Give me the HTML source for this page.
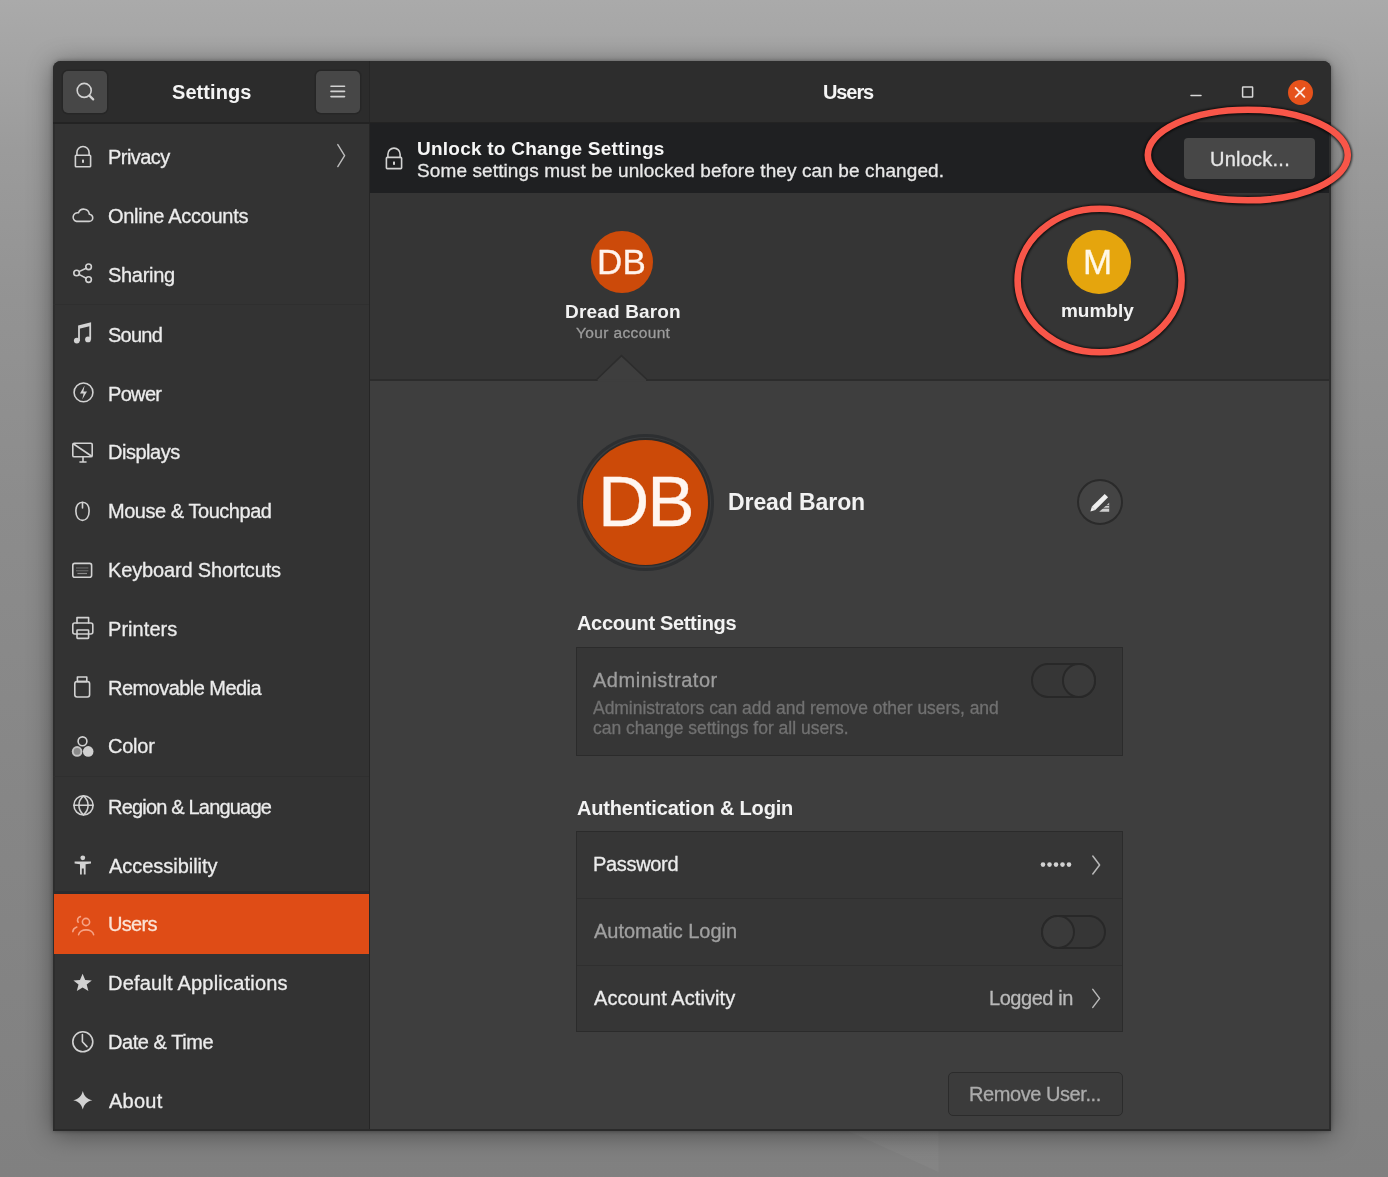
<!DOCTYPE html>
<html><head><meta charset="utf-8">
<style>
*{margin:0;padding:0;box-sizing:border-box}
html,body{width:1388px;height:1177px;overflow:hidden}
body{position:relative;font-family:"Liberation Sans",sans-serif;
background:linear-gradient(180deg,#aaaaaa 0px,#a4a4a4 60px,#9b9b9b 150px,#939393 300px,#8c8c8c 500px,#868686 800px,#808080 1177px);}
.a{position:absolute}
.t{position:absolute;white-space:nowrap;line-height:1;will-change:transform}
svg{position:absolute;left:0;top:0}
</style></head><body>
<svg width="1388" height="1177" viewBox="0 0 1388 1177">
 <polygon points="848,1131 938.5,1131 938.5,1172" fill="#fff" opacity=".035"/>
</svg>
<div class="a" style="left:53px;top:61px;width:1278px;height:1070px;border-radius:8px 8px 0 0;box-shadow:0 3px 26px rgba(0,0,0,.42),0 0 4px rgba(0,0,0,.35);background:#2d2d2d"></div>
<div class="a" style="left:55px;top:123px;width:1274px;height:1006px;background:#3e3e3e"></div>
<div class="a" style="left:53px;top:61px;width:316px;height:62px;background:#2c2c2c;border-radius:8px 0 0 0"></div>
<div class="a" style="left:370px;top:61px;width:961px;height:62px;background:#2d2d2d;border-radius:0 8px 0 0"></div>
<div class="a" style="left:55px;top:123px;width:314px;height:1006px;background:#333333"></div>
<div class="a" style="left:369px;top:61px;width:1px;height:1070px;background:#262626"></div>
<div class="a" style="left:53px;top:122px;width:1278px;height:2px;background:#232323"></div>
<div class="a" style="left:53px;top:1129px;width:1277px;height:2px;background:#2a2a2a"></div>
<!-- sidebar separators -->
<div class="a" style="left:53px;top:304px;width:316px;height:1px;background:#2f2f2f"></div>
<div class="a" style="left:53px;top:776px;width:316px;height:1px;background:#2f2f2f"></div>
<!-- header buttons -->
<div class="a" style="left:63px;top:71px;width:44px;height:42px;background:#474747;border-radius:5px;box-shadow:0 0 0 1.5px #262626"></div>
<div class="a" style="left:316px;top:71px;width:44px;height:42px;background:#474747;border-radius:5px;box-shadow:0 0 0 1.5px #262626"></div>
<div class="a" style="left:1287.5px;top:79.6px;width:25.4px;height:25.4px;background:#e6521b;border-radius:50%"></div>
<!-- info bar -->
<div class="a" style="left:370px;top:123px;width:959px;height:70px;background:#1f2022"></div>
<div class="a" style="left:1184px;top:138px;width:131px;height:41px;background:#474747;border-radius:4px"></div>
<!-- carousel -->
<div class="a" style="left:370px;top:193px;width:959px;height:187px;background:#353535"></div>
<div class="a" style="left:370px;top:379px;width:959px;height:2px;background:#2c2c2c"></div>
<div class="a" style="left:590.6px;top:230.6px;width:62.6px;height:62.6px;border-radius:50%;background:#cc4a0a"></div>
<div class="a" style="left:1066.7px;top:230.4px;width:64px;height:64px;border-radius:50%;background:#e5a50d"></div>
<!-- big avatar -->
<div class="a" style="left:576.7px;top:433.6px;width:137.6px;height:137.6px;border-radius:50%;background:#2d2f31"></div>
<div class="a" style="left:579.7px;top:436.6px;width:131.6px;height:131.6px;border-radius:50%;background:#3a3c3e"></div>
<div class="a" style="left:581.5px;top:438.4px;width:128px;height:128px;border-radius:50%;background:#2b2b2b"></div>
<div class="a" style="left:582.8px;top:439.7px;width:125.4px;height:125.4px;border-radius:50%;background:#cc4a08"></div>
<!-- edit button -->
<div class="a" style="left:1076.5px;top:479.3px;width:46px;height:46px;border-radius:50%;background:#444444;border:2px solid #2a2a2a"></div>
<!-- admin box -->
<div class="a" style="left:576px;top:647px;width:547px;height:109px;background:#363636;border:1.5px solid #2b2b2b"></div>
<div class="a" style="left:1031px;top:663px;width:64.5px;height:34.5px;border-radius:17px;background:#363636;border:2px solid #282828"></div>
<div class="a" style="left:1061.5px;top:663px;width:34px;height:34.5px;border-radius:50%;background:#3a3a3a;border:2px solid #282828"></div>
<!-- auth box -->
<div class="a" style="left:576px;top:831px;width:547px;height:201px;background:#363636;border:1.5px solid #2b2b2b"></div>
<div class="a" style="left:577px;top:898px;width:545px;height:1px;background:#2f2f2f"></div>
<div class="a" style="left:577px;top:965px;width:545px;height:1px;background:#2f2f2f"></div>
<div class="a" style="left:1040.5px;top:914.5px;width:65.5px;height:34.5px;border-radius:17px;background:#363636;border:2px solid #282828"></div>
<div class="a" style="left:1040.5px;top:914.5px;width:34px;height:34.5px;border-radius:50%;background:#3a3a3a;border:2px solid #282828"></div>
<!-- remove button -->
<div class="a" style="left:947.5px;top:1071.6px;width:175.5px;height:44px;background:#3b3b3b;border:1.6px solid #2b2b2b;border-radius:5px"></div>
<!-- users highlight -->
<div class="a" style="left:55px;top:891px;width:314px;height:3px;background:#2d2b2e"></div>
<div class="a" style="left:53.6px;top:894px;width:315.4px;height:59.6px;background:#df4c16"></div>
<svg width="1388" height="1177" viewBox="0 0 1388 1177">
 <!-- notch -->
 <path d="M596.2 380 L621.5 355.6 L647.4 380" fill="#3e3e3e" stroke="#2c2c2c" stroke-width="1.6"/>
 <rect x="597.6" y="379.6" width="48.4" height="2" fill="#3e3e3e"/>
 
<g fill="none" stroke="#d2d2d2" stroke-width="1.6" stroke-linecap="round" stroke-linejoin="round">
 <!-- search -->
 <circle cx="84.2" cy="90.4" r="7"/><line x1="89.4" y1="95.6" x2="93.2" y2="99.4" stroke-width="2.2"/>
 <!-- hamburger -->
 <line x1="331" y1="86.3" x2="344.5" y2="86.3"/><line x1="331" y1="91.4" x2="344.5" y2="91.4"/><line x1="331" y1="96.6" x2="344.5" y2="96.6"/>
 <!-- privacy lock -->
 <rect x="75.4" y="155.2" width="15.2" height="11.6" rx="0.8"/>
 <path d="M76.9 155.2 V152.6 a6.1 6.1 0 0 1 12.2 0 V155.2"/>
 <!-- chevron privacy -->
 <path d="M337.8 144.6 L344.6 155.6 L337.8 166.6" stroke="#bdbdbd" stroke-width="1.4"/>
 <!-- cloud -->
 <path d="M76.6 221.4 H89 a3.6 3.6 0 0 0 0.3 -7.2 a5.6 5.6 0 0 0 -10.8 -1.4 a4.3 4.3 0 0 0 -1.9 8.6 z"/>
 <!-- share -->
 <circle cx="88.6" cy="266.8" r="2.8"/><circle cx="76.6" cy="273" r="2.8"/><circle cx="88.6" cy="279.6" r="2.8"/>
 <line x1="79" y1="271.6" x2="86.2" y2="268.2"/><line x1="79" y1="274.4" x2="86.2" y2="278.2"/>
 <!-- power -->
 <circle cx="83.5" cy="392.4" r="9.4"/>
 <!-- displays -->
 <rect x="72.8" y="443.2" width="19.4" height="13.6" rx="1.4"/>
 <line x1="73.6" y1="444" x2="91.4" y2="456"/>
 <path d="M80 462 H86 M83 457 V462"/>
 <!-- mouse -->
 <path d="M82.5 502.2 c4 0 6.6 3.4 6.6 9 c0 5.6 -2.8 9.2 -6.6 9.2 c-3.8 0 -6.6 -3.6 -6.6 -9.2 c0 -5.6 2.6 -9 6.6 -9 z"/>
 <line x1="82.5" y1="502.6" x2="82.5" y2="508"/>
 <!-- keyboard -->
 <rect x="72.8" y="563.4" width="18.8" height="13.8" rx="2"/>
 <!-- printer -->
 <path d="M77 623 V617.6 H88.6 V623"/>
 <rect x="72.8" y="623" width="20" height="11" rx="2"/>
 <rect x="77" y="630" width="11.6" height="8.4" rx="0.6"/>
 <!-- removable -->
 <rect x="74.8" y="681.6" width="14.8" height="15.4" rx="2.2"/>
 <rect x="77.4" y="677" width="9.4" height="4.6"/>
 <!-- color -->
 <circle cx="82.5" cy="741.3" r="4.4"/>
 <!-- globe -->
 <circle cx="83.5" cy="805.3" r="9.6"/>
 <line x1="74" y1="805.3" x2="93" y2="805.3"/>
 <path d="M83.5 795.8 c-3.6 3 -4.6 6 -4.6 9.5 c0 3.5 1 6.5 4.6 9.5 c3.6 -3 4.6 -6 4.6 -9.5 c0 -3.5 -1 -6.5 -4.6 -9.5 z"/>
 <!-- clock -->
 <circle cx="82.8" cy="1041.8" r="10"/>
 <path d="M82.4 1034.6 V1041.8 L87 1046.6"/>
 <!-- users (orange) -->
 <g stroke="#f6a386">
  <circle cx="86" cy="922" r="3.6"/>
  <path d="M78.6 934.6 a7.6 5.6 0 0 1 15 0"/>
  <path d="M80.4 916.6 a3.6 3.6 0 0 0 -2.2 5.6"/>
  <path d="M72.8 931.6 a6.6 5.6 0 0 1 4 -4.6"/>
 </g>
 <!-- infobar lock -->
 <rect x="386.4" y="157.4" width="15.2" height="11.2" rx="0.8"/>
 <path d="M387.9 157.4 V154.2 a6.1 6.1 0 0 1 12.2 0 V157.4"/>
 <!-- password chevron -->
 <path d="M1092.8 856 L1099.6 865 L1092.8 874" stroke="#b8b8b8" stroke-width="1.5"/>
 <path d="M1092.8 989.4 L1099.6 998.4 L1092.8 1007.4" stroke="#b8b8b8" stroke-width="1.5"/>
 <!-- window buttons -->
 <line x1="1191" y1="95.6" x2="1201" y2="95.6" stroke="#d8d8d8" stroke-width="1.5"/>
 <rect x="1242.6" y="87" width="10" height="10" stroke="#d8d8d8" stroke-width="1.5" rx="0.5"/>
</g>
<g fill="#d2d2d2">
 <rect x="82" y="159.6" width="2" height="3.2"/>
 <rect x="393" y="161.6" width="2" height="3.2"/>
 <!-- music -->
 <path d="M79 341 V326.2 L90.2 323.4 V339.6" fill="none" stroke="#d2d2d2" stroke-width="1.8"/>
 <path d="M79 327.6 L90.2 324.8" fill="none" stroke="#d2d2d2" stroke-width="2.6"/>
 <circle cx="76.8" cy="340.6" r="2.9"/><circle cx="88" cy="339.4" r="2.9"/>
 <!-- power bolt -->
 <path d="M84.6 385.6 L80 393.4 H83.6 L82.2 399.4 L87 391.4 H83.4 z"/>
 <!-- color filled -->
 <circle cx="77.1" cy="751.4" r="5.3" fill="#c4c4c4"/>
 <circle cx="77.1" cy="751.4" r="3.4" fill="#8a8a8a"/>
 <circle cx="88.2" cy="751.4" r="5.3" fill="#d0d0d0"/>
 <!-- accessibility -->
 <circle cx="82.8" cy="857.8" r="2.4"/>
 <path d="M74.6 861.6 H91 V863.6 L85.6 864.2 V874.4 H83.8 V868.6 H81.8 V874.4 H80 V864.2 L74.6 863.6 z"/>
 <!-- star -->
 <path d="M82.6 973.8 L85.2 980 L91.8 980.4 L86.7 984.6 L88.4 991 L82.6 987.4 L76.8 991 L78.5 984.6 L73.4 980.4 L80 980 z"/>
 <!-- about 4pt star -->
 <path d="M82.8 1091 C84.2 1096.2 86.4 1098.8 92.4 1100.3 C86.4 1101.8 84.2 1104.4 82.8 1109.6 C81.4 1104.4 79.2 1101.8 73.2 1100.3 C79.2 1098.8 81.4 1096.2 82.8 1091 z"/>
 <!-- keyboard keys -->
 <rect x="76" y="567.4" width="12.4" height="1.1" opacity=".35"/>
 <rect x="76" y="570.2" width="12.4" height="1.1" opacity=".35"/>
 <rect x="77.4" y="572.9" width="9.6" height="1.2" opacity=".55"/>
 <!-- password dots -->
 <circle cx="1043" cy="864.6" r="2.3"/><circle cx="1049.5" cy="864.6" r="2.3"/><circle cx="1056" cy="864.6" r="2.3"/><circle cx="1062.5" cy="864.6" r="2.3"/><circle cx="1069" cy="864.6" r="2.3"/>
</g>

 <!-- close X -->
 <path d="M1295.6 88 L1304.4 96.8 M1304.4 88 L1295.6 96.8" stroke="#fbe8e0" stroke-width="1.8" stroke-linecap="round"/>
 <!-- pencil -->
 <line x1="1093.6" y1="508.2" x2="1106.4" y2="495.6" stroke="#f0f0f0" stroke-width="4.8"/>
 <path d="M1090.4 511.6 L1091.9 506.4 L1095.4 509.9 z" fill="#f0f0f0"/>
 <path d="M1099.2 511.8 L1109.2 502.8 L1109.2 511.8 z" fill="#cfcfcf"/>
 <path d="M1101.5 508.2 H1109.2 M1104.8 505.4 H1109.2" stroke="#444" stroke-width="0.9"/>
</svg>
<div class="t" style="left:108.2px;top:146.9px;font-size:20px;letter-spacing:-0.55px;color:#ececec;-webkit-text-stroke:0.3px #ececec;">Privacy</div><div class="t" style="left:108.2px;top:205.5px;font-size:20px;letter-spacing:-0.293px;color:#ececec;-webkit-text-stroke:0.3px #ececec;">Online Accounts</div><div class="t" style="left:108.2px;top:264.5px;font-size:20px;letter-spacing:-0.3px;color:#ececec;-webkit-text-stroke:0.3px #ececec;">Sharing</div><div class="t" style="left:108.2px;top:324.5px;font-size:20px;letter-spacing:-0.75px;color:#ececec;-webkit-text-stroke:0.3px #ececec;">Sound</div><div class="t" style="left:108.2px;top:383.5px;font-size:20px;letter-spacing:-0.675px;color:#ececec;-webkit-text-stroke:0.3px #ececec;">Power</div><div class="t" style="left:108.2px;top:441.79999999999995px;font-size:20px;letter-spacing:-0.486px;color:#ececec;-webkit-text-stroke:0.3px #ececec;">Displays</div><div class="t" style="left:108.2px;top:501.29999999999995px;font-size:20px;letter-spacing:-0.46px;color:#ececec;-webkit-text-stroke:0.3px #ececec;">Mouse &amp; Touchpad</div><div class="t" style="left:108.2px;top:559.6999999999999px;font-size:20px;letter-spacing:-0.153px;color:#ececec;-webkit-text-stroke:0.3px #ececec;">Keyboard Shortcuts</div><div class="t" style="left:108.2px;top:619.1999999999999px;font-size:20px;letter-spacing:0.057px;color:#ececec;-webkit-text-stroke:0.3px #ececec;">Printers</div><div class="t" style="left:108.2px;top:677.5px;font-size:20px;letter-spacing:-0.543px;color:#ececec;-webkit-text-stroke:0.3px #ececec;">Removable Media</div><div class="t" style="left:108.2px;top:736.3px;font-size:20px;letter-spacing:-0.225px;color:#ececec;-webkit-text-stroke:0.3px #ececec;">Color</div><div class="t" style="left:108.2px;top:796.8px;font-size:20px;letter-spacing:-0.81px;color:#ececec;-webkit-text-stroke:0.3px #ececec;">Region &amp; Language</div><div class="t" style="left:109.2px;top:855.5px;font-size:20px;letter-spacing:-0.033px;color:#ececec;-webkit-text-stroke:0.3px #ececec;">Accessibility</div><div class="t" style="left:108.2px;top:913.9px;font-size:20px;letter-spacing:-0.7px;color:#fbe3d6;-webkit-text-stroke:0.3px #fbe3d6;">Users</div><div class="t" style="left:108.2px;top:973.0px;font-size:20px;letter-spacing:0.205px;color:#ececec;-webkit-text-stroke:0.3px #ececec;">Default Applications</div><div class="t" style="left:108.2px;top:1031.8000000000002px;font-size:20px;letter-spacing:-0.45px;color:#ececec;-webkit-text-stroke:0.3px #ececec;">Date &amp; Time</div><div class="t" style="left:109.4px;top:1090.9px;font-size:20px;letter-spacing:0.25px;color:#ececec;-webkit-text-stroke:0.3px #ececec;">About</div><div class="t" style="left:171.9px;top:81.9px;font-size:20px;letter-spacing:0.071px;color:#f4f4f4;font-weight:bold;">Settings</div><div class="t" style="left:823.4px;top:81.7px;font-size:20px;letter-spacing:-1.1px;color:#f4f4f4;font-weight:bold;">Users</div><div class="t" style="left:417.2px;top:138.7px;font-size:19px;letter-spacing:0.237px;color:#f6f6f6;font-weight:bold;">Unlock to Change Settings</div><div class="t" style="left:417px;top:160.7px;font-size:19px;letter-spacing:0.111px;color:#e8e8e8;-webkit-text-stroke:0.3px #e8e8e8;">Some settings must be unlocked before they can be changed.</div><div class="t" style="left:1209.5px;top:148.5px;font-size:20px;letter-spacing:0.238px;color:#e6e6e6;-webkit-text-stroke:0.3px #e6e6e6;">Unlock...</div><div class="t" style="left:597.1px;top:244.0px;font-size:35px;letter-spacing:0.1px;color:#fff4ee;-webkit-text-stroke:0.3px #fff4ee;">DB</div><div class="t" style="left:564.6px;top:302.1px;font-size:19px;letter-spacing:0.17px;color:#f2f2f2;font-weight:bold;">Dread Baron</div><div class="t" style="left:575.7px;top:324.8px;font-size:15.5px;letter-spacing:0.364px;color:#9c9c9c;-webkit-text-stroke:0.3px #9c9c9c;">Your account</div><div class="t" style="left:1083px;top:244.1px;font-size:35px;letter-spacing:0px;color:#fff8e8;-webkit-text-stroke:0.3px #fff8e8;">M</div><div class="t" style="left:1061.4px;top:301.4px;font-size:19px;letter-spacing:-0.02px;color:#f2f2f2;font-weight:bold;">mumbly</div><div class="t" style="left:597.5px;top:465.9px;font-size:71px;letter-spacing:-1.9px;color:#fff6f0;-webkit-text-stroke:0.3px #fff6f0;">DB</div><div class="t" style="left:727.6px;top:491.0px;font-size:23px;letter-spacing:-0.09px;color:#f2f2f2;font-weight:bold;">Dread Baron</div><div class="t" style="left:576.6px;top:612.6px;font-size:20px;letter-spacing:-0.327px;color:#f2f2f2;font-weight:bold;">Account Settings</div><div class="t" style="left:592.9px;top:670.4px;font-size:20px;letter-spacing:0.533px;color:#9d9d9d;-webkit-text-stroke:0.3px #9d9d9d;">Administrator</div><div class="t" style="left:593px;top:699.9px;font-size:17.5px;letter-spacing:-0.037px;color:#717171;-webkit-text-stroke:0.3px #717171;">Administrators can add and remove other users, and</div><div class="t" style="left:593px;top:719.7px;font-size:17.5px;letter-spacing:-0.009px;color:#717171;-webkit-text-stroke:0.3px #717171;">can change settings for all users.</div><div class="t" style="left:576.6px;top:797.6px;font-size:20px;letter-spacing:-0.176px;color:#f2f2f2;font-weight:bold;">Authentication &amp; Login</div><div class="t" style="left:593px;top:854.3px;font-size:20px;letter-spacing:-0.329px;color:#ececec;-webkit-text-stroke:0.3px #ececec;">Password</div><div class="t" style="left:593.7px;top:921.3px;font-size:20px;letter-spacing:-0.029px;color:#a0a0a0;-webkit-text-stroke:0.3px #a0a0a0;">Automatic Login</div><div class="t" style="left:593.7px;top:988.3px;font-size:20px;letter-spacing:0.08px;color:#ececec;-webkit-text-stroke:0.3px #ececec;">Account Activity</div><div class="t" style="left:988.5px;top:987.9px;font-size:20px;letter-spacing:-0.45px;color:#b9b9b9;-webkit-text-stroke:0.3px #b9b9b9;">Logged in</div><div class="t" style="left:969.1px;top:1083.5px;font-size:20px;letter-spacing:-0.431px;color:#ababab;-webkit-text-stroke:0.3px #ababab;">Remove User...</div>
<svg width="1388" height="1177" viewBox="0 0 1388 1177">
  <defs><filter id="sh" x="-20%" y="-30%" width="140%" height="160%"><feGaussianBlur stdDeviation="0.9"/></filter></defs>
  <g fill="none" filter="url(#sh)" stroke="#000" stroke-opacity=".75" stroke-width="9">
  <ellipse cx="1247.8" cy="155.3" rx="100" ry="45.3"/>
  <ellipse cx="1099.6" cy="280.8" rx="82" ry="71.8"/>
  </g>
  <g fill="none" stroke="#f85649" stroke-width="6.6">
  <ellipse cx="1247.8" cy="155" rx="100" ry="45.3"/>
  <ellipse cx="1099.6" cy="280.5" rx="82" ry="71.8"/>
  </g>
</svg>
</body></html>
